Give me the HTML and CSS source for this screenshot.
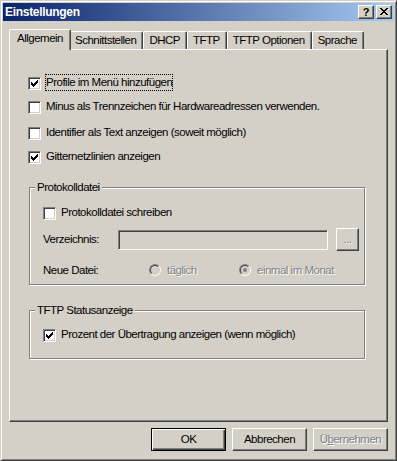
FILE: index.html
```html
<!DOCTYPE html>
<html lang="de">
<head>
<meta charset="utf-8">
<title>Einstellungen</title>
<link rel="stylesheet" href="styles.css">
</head>
<body>
<div class="window">
  <div class="titlebar">
    <span class="title">Einstellungen</span>
    <div class="caption-buttons">
      <span class="cap-btn help">?</span>
      <span class="cap-btn close"><svg width="8" height="7" viewBox="0 0 8 7" shape-rendering="crispEdges"><path d="M0 0h2v1H0zM6 0h2v1H6zM1 1h2v1H1zM5 1h2v1H5zM2 2h4v1H2zM3 3h2v1H3zM2 4h4v1H2zM1 5h2v1H1zM5 5h2v1H5zM0 6h2v1H0zM6 6h2v1H6z"/></svg></span>
    </div>
  </div>

  <div class="tabs">
    <div class="tab active">Allgemein</div>
    <div class="tab">Schnittstellen</div>
    <div class="tab">DHCP</div>
    <div class="tab">TFTP</div>
    <div class="tab">TFTP Optionen</div>
    <div class="tab">Sprache</div>
  </div>

  <div class="panel">
    <div class="row">
      <span class="check"><svg width="11" height="11" viewBox="0 0 11 11" shape-rendering="crispEdges"><path d="M2 4h1v3H2zM3 5h1v3H3zM4 6h1v3H4zM5 5h1v3H5zM6 4h1v3H6zM7 3h1v3H7zM8 2h1v3H8z"/></svg></span>
      <span class="label focus">Profile im Menü hinzufügen</span>
    </div>
    <div class="row r2">
      <span class="check"></span>
      <span class="label">Minus als Trennzeichen für Hardwareadressen verwenden.</span>
    </div>
    <div class="row r3">
      <span class="check"></span>
      <span class="label">Identifier als Text anzeigen (soweit möglich)</span>
    </div>
    <div class="row r4">
      <span class="check"><svg width="11" height="11" viewBox="0 0 11 11" shape-rendering="crispEdges"><path d="M2 4h1v3H2zM3 5h1v3H3zM4 6h1v3H4zM5 5h1v3H5zM6 4h1v3H6zM7 3h1v3H7zM8 2h1v3H8z"/></svg></span>
      <span class="label">Gitternetzlinien anzeigen</span>
    </div>

    <div class="group g1">
      <span class="group-title">Protokolldatei</span>
      <div class="row g-first">
        <span class="check"></span>
        <span class="label">Protokolldatei schreiben</span>
      </div>
      <div class="field-row">
        <span class="field-label">Verzeichnis:</span>
        <span class="input"></span>
        <span class="browse"><span class="disabled">...</span></span>
      </div>
      <div class="radio-row">
        <span class="field-label">Neue Datei:</span>
        <span class="radio-opt first"><span class="radio"></span><span class="radio-text disabled">täglich</span></span>
        <span class="radio-opt"><span class="radio on"></span><span class="radio-text disabled">einmal im Monat</span></span>
      </div>
    </div>

    <div class="group g2">
      <span class="group-title">TFTP Statusanzeige</span>
      <div class="row g-first2">
        <span class="check"><svg width="11" height="11" viewBox="0 0 11 11" shape-rendering="crispEdges"><path d="M2 4h1v3H2zM3 5h1v3H3zM4 6h1v3H4zM5 5h1v3H5zM6 4h1v3H6zM7 3h1v3H7zM8 2h1v3H8z"/></svg></span>
        <span class="label">Prozent der Übertragung anzeigen (wenn möglich)</span>
      </div>
    </div>
  </div>

  <div class="buttons">
    <button class="btn default">OK</button>
    <button class="btn">Abbrechen</button>
    <button class="btn"><span class="disabled">Ü<span class="u">b</span>ernehmen</span></button>
  </div>
</div>
</body>
</html>
```

FILE: styles.css
```css
* { box-sizing: border-box; }

html, body {
  margin: 0;
  padding: 0;
  background: #d4d0c8;
}

body {
  font-family: "Liberation Sans", Arial, sans-serif;
  font-size: 11.5px;
  letter-spacing: -0.5px;
  color: #000;
}

.window {
  width: 397px;
  height: 461px;
  border: 1px solid;
  border-color: #d4d0c8 #404040 #404040 #d4d0c8;
  box-shadow: inset 1px 1px #fff, inset -1px -1px #808080;
  padding: 2px;
  display: flex;
  flex-direction: column;
  background: #d4d0c8;
}

/* ---------- title bar ---------- */
.titlebar {
  flex: none;
  height: 18px;
  background: linear-gradient(to right, #0a246a, #a6caf0);
  display: flex;
  align-items: center;
  justify-content: space-between;
  padding: 0 2px;
}

.title {
  font-weight: bold;
  font-size: 12px;
  letter-spacing: -0.3px;
  color: #fff;
  line-height: 18px;
}

.caption-buttons {
  display: flex;
  gap: 2px;
}

.cap-btn {
  width: 16px;
  height: 14px;
  background: #d4d0c8;
  border: 1px solid;
  border-color: #fff #404040 #404040 #fff;
  box-shadow: inset -1px -1px #808080;
  display: flex;
  align-items: center;
  justify-content: center;
}

.cap-btn svg { display: block; margin: 0 1px 1px 0; }

.help {
  font-weight: bold;
  font-size: 11px;
  letter-spacing: 0;
  line-height: 12px;
}

/* ---------- tabs ---------- */
.tabs {
  flex: none;
  display: flex;
  align-items: flex-end;
  height: 20px;
  margin: 8px 0 0 8px;
  position: relative;
  z-index: 1;
}

.tab {
  height: 18px;
  padding: 0 6px 0 5px;
  border-top: 1px solid #fff;
  border-left: 1px solid #fff;
  border-right: 1px solid #404040;
  box-shadow: inset -1px 0 #808080;
  border-top-left-radius: 2px;
  border-top-right-radius: 2px;
  line-height: 17px;
  white-space: nowrap;
  background: #d4d0c8;
}

.tab.active {
  height: 21px;
  margin: 0 -2px -1px;
  padding: 0 7px;
  position: relative;
  z-index: 2;
}

/* ---------- panel ---------- */
.panel {
  flex: none;
  height: 373px;
  margin: 0 6px;
  border: 1px solid;
  border-color: #fff #404040 #404040 #fff;
  box-shadow: inset -1px -1px #808080;
  padding: 27px 0 0 18px;
  display: flex;
  flex-direction: column;
  align-items: flex-start;
}

.row {
  display: flex;
  align-items: flex-start;
  height: 13px;
  white-space: nowrap;
}

.r2, .r4 { margin-top: 11px; }
.r3 { margin-top: 13px; }

.check {
  flex: none;
  width: 13px;
  height: 13px;
  background: #fff;
  border: 1px solid;
  border-color: #808080 #fff #fff #808080;
  box-shadow: inset 1px 1px #404040, inset -1px -1px #d4d0c8;
}

.check svg { display: block; }

.label {
  margin-left: 5px;
  line-height: 11px;
}

.label.focus {
  padding: 3px 1px;
  margin: -3px 0 0 4px;
  outline: 1px dotted #000;
  outline-offset: -1px;
}

/* ---------- group boxes ---------- */
.group {
  width: 336px;
  margin-left: 1px;
  border: 1px solid #808080;
  box-shadow: inset 1px 1px #fff, 1px 1px #fff;
  padding: 0 5px 0 13px;
  display: flex;
  flex-direction: column;
  align-items: flex-start;
}

.g1 { margin-top: 23px; height: 98px; }
.g2 { margin-top: 25px; height: 49px; }

.group-title {
  margin: -7px 0 0 -8px;
  padding: 0 2px;
  height: 13px;
  line-height: 13px;
  background: #d4d0c8;
}

.g-first { margin-top: 13px; }
.g-first2 { margin-top: 12px; }

.field-row {
  width: 100%;
  display: flex;
  align-items: flex-start;
  height: 23px;
  margin-top: 8px;
}

.field-label {
  flex: none;
  width: 75px;
  line-height: 13px;
  align-self: center;
}

.input {
  flex: 1;
  height: 20px;
  margin-top: 2px;
  background: #d4d0c8;
  border: 1px solid;
  border-color: #808080 #fff #fff #808080;
  box-shadow: inset 1px 1px #404040, inset -1px -1px #d4d0c8;
}

.browse {
  flex: none;
  width: 23px;
  height: 23px;
  margin-left: 8px;
  border: 1px solid;
  border-color: #fff #404040 #404040 #fff;
  box-shadow: inset -1px -1px #808080;
  display: flex;
  align-items: center;
  justify-content: center;
  line-height: 13px;
}

.radio-row {
  width: 100%;
  display: flex;
  align-items: center;
  height: 12px;
  margin-top: 13px;
}

.radio-opt {
  display: flex;
  align-items: center;
  width: 90px;
  white-space: nowrap;
}

.radio-opt.first { margin-left: 31px; }

.radio {
  flex: none;
  position: relative;
  width: 12px;
  height: 12px;
  border-radius: 50%;
  border: 1px solid;
  border-color: #808080 #fff #fff #808080;
}

.radio::before {
  content: "";
  position: absolute;
  inset: 0;
  border-radius: 50%;
  border: 1px solid;
  border-color: #404040 #d4d0c8 #d4d0c8 #404040;
  background: #d4d0c8;
}

.radio.on::after {
  content: "";
  position: absolute;
  left: 3px;
  top: 3px;
  width: 4px;
  height: 4px;
  border-radius: 50%;
  background: #808080;
}

.radio-text {
  margin-left: 6px;
  line-height: 13px;
}

.disabled {
  color: #808080;
  text-shadow: 1px 1px #fff;
}

.u { text-decoration: underline; }

/* ---------- dialog buttons ---------- */
.buttons {
  flex: none;
  display: flex;
  justify-content: flex-end;
  gap: 6px;
  margin: 6px 6px 0 0;
}

.btn {
  width: 75px;
  height: 23px;
  padding: 0;
  font: inherit;
  letter-spacing: inherit;
  color: #000;
  background: #d4d0c8;
  border: 1px solid;
  border-color: #fff #404040 #404040 #fff;
  box-shadow: inset -1px -1px #808080;
  display: flex;
  align-items: center;
  justify-content: center;
  line-height: 13px;
}

.btn.default {
  border-color: #000;
  box-shadow: inset 1px 1px #fff, inset -1px -1px #404040, inset -2px -2px #808080;
}
```
